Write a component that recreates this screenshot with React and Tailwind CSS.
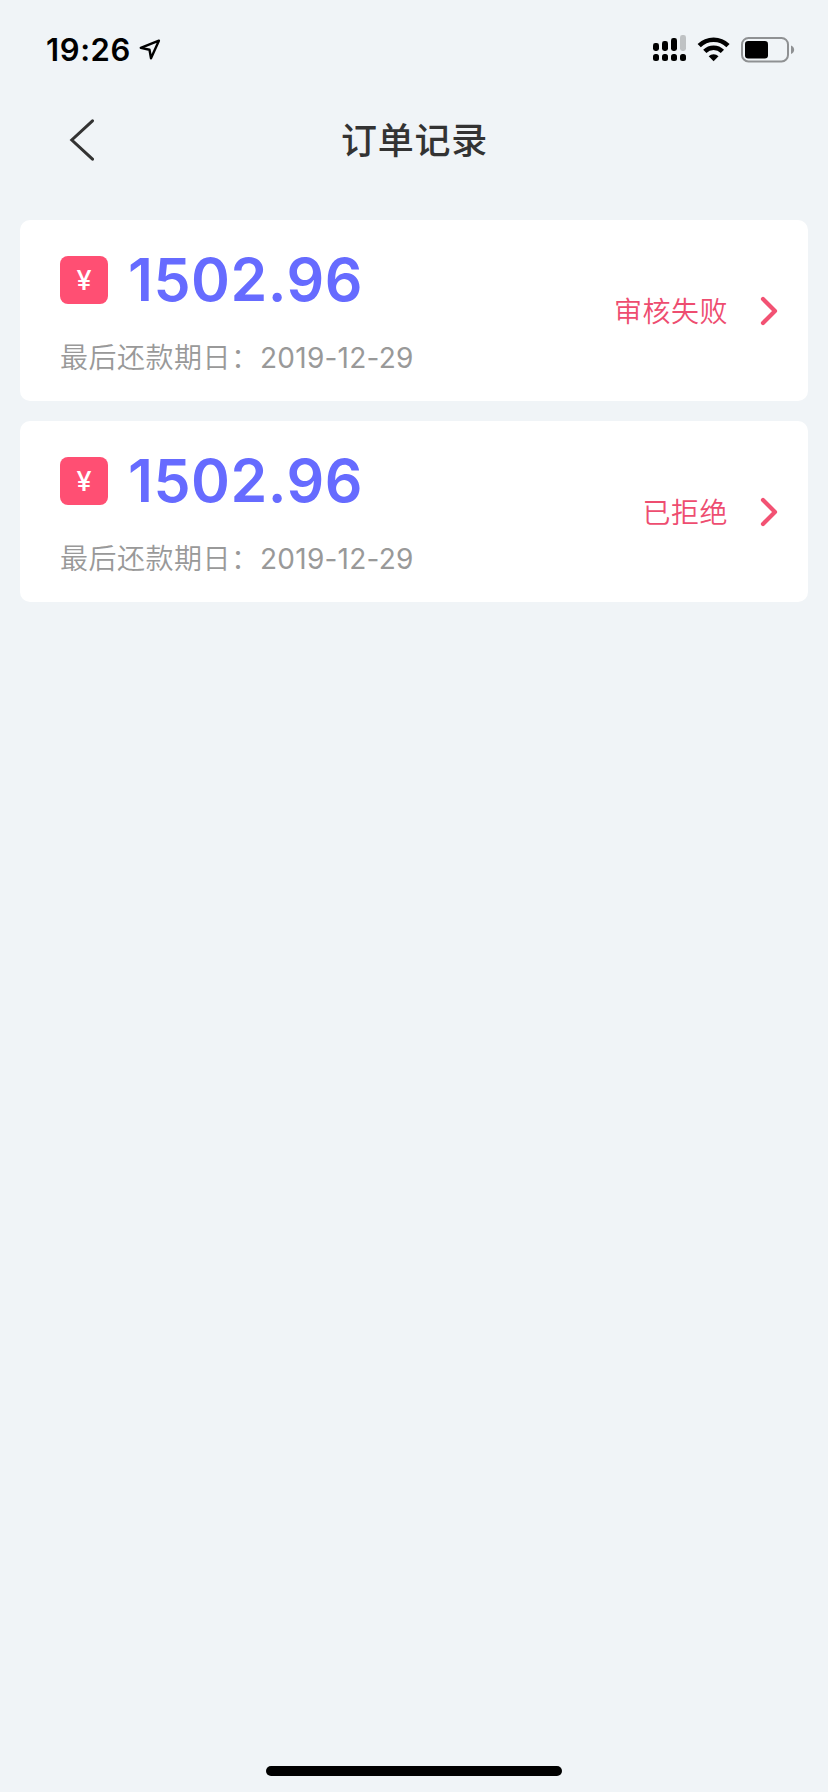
const orders = [
  { id: 1, amount: '1502.96', due: '2019-12-29', status: '审核失败' },
  { id: 2, amount: '1502.96', due: '2019-12-29', status: '已拒绝' },
];

function StatusBar() {
  return (
    <div className="flex h-[98px] items-center justify-between pl-[46px] pr-[33px]">
      <div className="flex items-center">
        <span className="w-[92px] whitespace-nowrap pt-[2px] text-[31px] leading-[38px] font-semibold tracking-[0.6px] text-black">19:26</span>
        <svg className="h-6 w-6" viewBox="0 0 24 24" fill="none" stroke="#000" strokeWidth="2.4" strokeLinejoin="round">
          <path d="M20.9 3.7 2.8 10.9 11.5 12.7 13 21.2Z" />
        </svg>
      </div>
      <div className="flex items-center">
        <svg className="h-7 w-[34px]" viewBox="0 0 34 28">
          <g fill="#000">
            <rect x="0" y="8" width="6" height="8" rx="2.4" />
            <rect x="9" y="6" width="6" height="10" rx="2.4" />
            <rect x="18" y="3" width="6" height="13" rx="2.4" />
            <rect x="27" y="0" width="6" height="16" rx="2.4" fill="#bfc2c4" />
            <rect x="0" y="19" width="6" height="7" rx="2.5" />
            <rect x="9" y="19" width="6" height="7" rx="2.5" />
            <rect x="18" y="19" width="6" height="7" rx="2.5" />
            <rect x="27" y="19" width="6" height="7" rx="2.5" />
          </g>
        </svg>
        <svg className="ml-[10px] h-7 w-[34px]" viewBox="0 0 34 28">
          <g fill="none" stroke="#000" strokeWidth="4.6">
            <path d="M2.2 10.7A20.5 20.5 0 0 1 31 10.7" />
            <path d="M7.8 16.3A12.6 12.6 0 0 1 25.4 16.3" />
          </g>
          <path d="M16.6 26.2 11.7 21.2A7 7 0 0 1 21.5 21.2Z" fill="#000" />
        </svg>
        <svg className="ml-[10px] h-7 w-[54px]" viewBox="0 0 54 28">
          <rect x="1" y="3" width="46" height="23.4" rx="6.5" fill="none" stroke="#8f9193" strokeWidth="2" />
          <rect x="4" y="6" width="23" height="17.4" rx="3.2" fill="#000" />
          <path d="M50 10.5C54.2 12 54.2 17.4 50 18.9Z" fill="#8f9193" />
        </svg>
      </div>
    </div>
  );
}

function NavBar() {
  return (
    <header className="grid h-[84px] grid-cols-3 items-center">
      <svg className="ml-[69px] h-[42px] w-[27px]" viewBox="0 0 27 42" fill="none" stroke="#333" strokeWidth="3" strokeLinecap="round">
        <path d="M23.5 1.8 2.8 21 23.5 40.2" />
      </svg>
      <h1 className="whitespace-nowrap pl-[1px] pt-[2px] text-center text-[36px] leading-[48px] font-medium tracking-[0.8px] text-[#333]">订单记录</h1>
    </header>
  );
}

function OrderCard({ order }) {
  return (
    <article className="flex h-[181px] items-center justify-between rounded-[10px] bg-white pl-10 pr-[29px]">
      <div className="flex flex-col pt-[6px]">
        <div className="flex h-[60px] items-center">
          <div className="flex h-12 w-12 items-center justify-center rounded-[8px] bg-[#ff4f73] pt-[2px] text-[27px] leading-none font-medium text-white">¥</div>
          <span className="ml-5 whitespace-nowrap text-[59px] leading-[60px] font-semibold tracking-[0.5px] text-[#666bff]">{order.amount}</span>
        </div>
        <p className="mt-[28px] flex whitespace-nowrap text-[28px] leading-[40px] text-[#999]">
          <span className="w-[200px] font-[350] tracking-[0.5px]">最后还款期日：</span>
          <span className="tracking-[0.25px]">{order.due}</span>
        </p>
      </div>
      <div className="flex items-center">
        <span className="whitespace-nowrap pt-[2px] text-[28px] leading-[40px] font-[350] tracking-[0.5px] text-[#ee4d70]">{order.status}</span>
        <svg className="ml-[31px] h-[30px] w-5" viewBox="0 0 20 30" fill="none" stroke="#f25273" strokeWidth="4.2" strokeLinecap="round" strokeLinejoin="round">
          <path d="M4 3 16 15 4 27" />
        </svg>
      </div>
    </article>
  );
}

export default function App() {
  return (
    <div className="flex h-[1792px] w-[828px] flex-col bg-[#f0f4f7] font-['Inter','Noto_Sans_CJK_SC',sans-serif]">
      <StatusBar />
      <NavBar />
      <main className="mt-[38px] flex flex-1 flex-col gap-5 px-5">
        {orders.map((order) => (
          <OrderCard key={order.id} order={order} />
        ))}
      </main>
      <div className="mb-4 h-[10px] w-[296px] self-center rounded-full bg-black" />
    </div>
  );
}
